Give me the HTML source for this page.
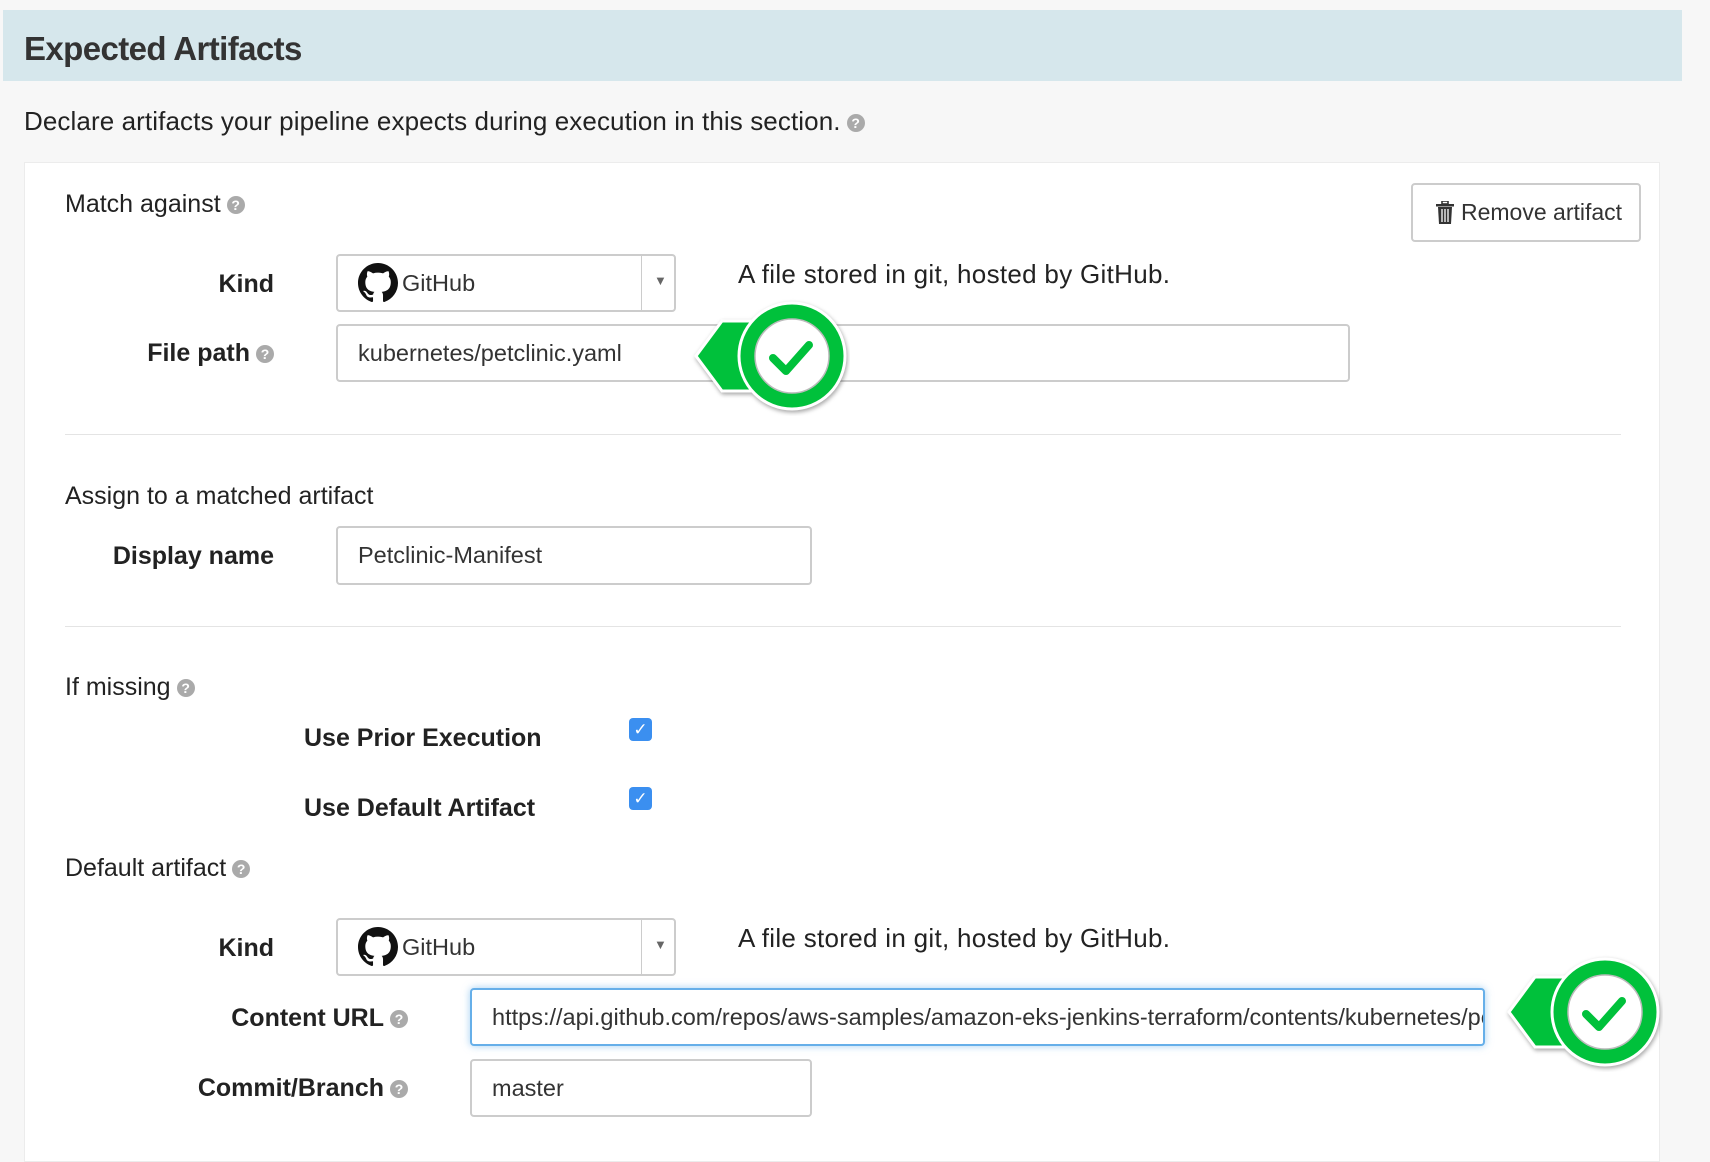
<!DOCTYPE html>
<html><head><meta charset="utf-8"><style>
*{box-sizing:border-box;margin:0;padding:0}
body{width:1710px;height:1150px;background:#f7f7f7;font-family:"Liberation Sans",sans-serif;color:#222;position:relative;overflow:hidden}
.a{position:absolute;white-space:nowrap}
.hdr{left:3px;top:10px;width:1679px;height:71px;background:#d6e7ec}
.t{font-size:25px;letter-spacing:0;line-height:28px}
.b{font-weight:bold;font-size:25px;letter-spacing:0;line-height:28px;text-align:right}
.q{display:inline-block;width:18px;height:18px;border-radius:50%;background:#aaa;color:#fff;font-size:14px;line-height:18px;text-align:center;font-weight:bold;vertical-align:2px;margin-left:6px;letter-spacing:0}
.inp{background:#fff;border:2px solid #ccc;border-radius:4px;font-size:23.5px;color:#333;padding-left:20px;letter-spacing:0;display:flex;align-items:center;overflow:hidden}
.hr{left:65px;width:1556px;height:1px;background:#e4e4e4}
.cb{width:23px;height:23px;border-radius:4px;background:#3b8ff0;color:#fff;font-size:17px;line-height:23px;text-align:center}
</style></head><body>
<div class="a hdr"></div>
<div class="a" style="left:24px;top:30px;font-size:33px;font-weight:bold;color:#333;letter-spacing:-0.6px">Expected Artifacts</div>
<div class="a t" style="left:24px;top:107px;font-size:26px;letter-spacing:0.1px">Declare artifacts your pipeline expects during execution in this section.<span class="q">?</span></div>
<div class="a" style="left:24px;top:162px;width:1636px;height:1000px;background:#fff;border:1px solid #ececec"></div>

<div class="a t" style="left:65px;top:190px">Match against<span class="q">?</span></div>
<div class="a inp" style="left:1411px;top:183px;width:230px;height:59px;padding-left:22px;font-size:23px">
<svg width="20" height="24" viewBox="0 0 20 24" style="margin-right:6px"><rect x="1" y="3" width="18" height="2.5" fill="#333"/><rect x="7" y="0" width="6" height="3" fill="none" stroke="#333" stroke-width="1.6"/><path d="M3 6h14l-1 17H4z" fill="#333"/><path d="M7 8v13M10 8v13M13 8v13" stroke="#fff" stroke-width="1.3"/></svg>Remove artifact</div>

<div class="a b" style="left:100px;width:174px;top:270px">Kind</div>
<div class="a inp" style="left:336px;top:254px;width:340px;height:58px;padding-left:20px">
<svg width="40" height="40" viewBox="0 0 16 16" style="margin-right:4px"><path fill="#111" d="M8 0C3.58 0 0 3.58 0 8c0 3.54 2.29 6.53 5.47 7.59.4.07.55-.17.55-.38 0-.19-.01-.82-.01-1.49-2.01.37-2.53-.49-2.69-.94-.09-.23-.48-.94-.82-1.130-.28-.15-.68-.52-.01-.53.63-.01 1.08.58 1.23.82.72 1.21 1.87.87 2.33.66.07-.52.28-.87.51-1.07-1.78-.2-3.64-.89-3.64-3.95 0-.87.31-1.59.82-2.15-.08-.2-.36-1.02.08-2.12 0 0 .67-.21 2.2.82.64-.18 1.32-.27 2-.27.68 0 1.36.09 2 .27 1.53-1.04 2.2-.82 2.2-.82.44 1.1.16 1.92.08 2.12.51.56.82 1.27.82 2.15 0 3.07-1.87 3.75-3.65 3.95.29.25.54.73.54 1.48 0 1.07-.01 1.93-.01 2.2 0 .21.15.46.55.38A8.013 8.013 0 0016 8c0-4.42-3.58-8-8-8z"/></svg>GitHub
<div style="position:absolute;left:303px;top:0;width:1px;height:100%;background:#ccc"></div><div style="position:absolute;left:316px;top:17px;font-size:13px;color:#666">▼</div></div>
<div class="a t" style="left:738px;top:260px;font-size:26px;letter-spacing:0.3px">A file stored in git, hosted by GitHub.</div>

<div class="a b" style="left:60px;width:214px;top:339px">File path<span class="q">?</span></div>
<div class="a inp" style="left:336px;top:324px;width:1014px;height:58px">kubernetes/petclinic.yaml</div>

<div class="a hr" style="top:434px"></div>
<div class="a t" style="left:65px;top:482px">Assign to a matched artifact</div>
<div class="a b" style="left:60px;width:214px;top:542px">Display name</div>
<div class="a inp" style="left:336px;top:526px;width:476px;height:59px">Petclinic-Manifest</div>
<div class="a hr" style="top:626px"></div>

<div class="a t" style="left:65px;top:673px">If missing<span class="q">?</span></div>
<div class="a b" style="left:304px;top:724px;text-align:left">Use Prior Execution</div>
<div class="a cb" style="left:629px;top:718px">✓</div>
<div class="a b" style="left:304px;top:794px;text-align:left">Use Default Artifact</div>
<div class="a cb" style="left:629px;top:787px">✓</div>
<div class="a t" style="left:65px;top:854px">Default artifact<span class="q">?</span></div>

<div class="a b" style="left:100px;width:174px;top:934px">Kind</div>
<div class="a inp" style="left:336px;top:918px;width:340px;height:58px;padding-left:20px">
<svg width="40" height="40" viewBox="0 0 16 16" style="margin-right:4px"><path fill="#111" d="M8 0C3.58 0 0 3.58 0 8c0 3.54 2.29 6.53 5.47 7.59.4.07.55-.17.55-.38 0-.19-.01-.82-.01-1.49-2.01.37-2.53-.49-2.69-.94-.09-.23-.48-.94-.82-1.13-.28-.15-.68-.52-.01-.53.63-.01 1.08.58 1.23.82.72 1.21 1.87.87 2.33.66.07-.52.28-.87.51-1.07-1.78-.2-3.64-.89-3.64-3.95 0-.87.31-1.59.82-2.15-.08-.2-.36-1.02.08-2.12 0 0 .67-.21 2.2.82.64-.18 1.32-.27 2-.27.68 0 1.36.09 2 .27 1.53-1.04 2.2-.82 2.2-.82.44 1.1.16 1.92.08 2.12.51.56.82 1.27.82 2.15 0 3.07-1.87 3.75-3.65 3.95.29.25.54.73.54 1.48 0 1.07-.01 1.93-.01 2.2 0 .21.15.46.55.38A8.013 8.013 0 0016 8c0-4.42-3.58-8-8-8z"/></svg>GitHub
<div style="position:absolute;left:303px;top:0;width:1px;height:100%;background:#ccc"></div><div style="position:absolute;left:316px;top:17px;font-size:13px;color:#666">▼</div></div>
<div class="a t" style="left:738px;top:924px;font-size:26px;letter-spacing:0.3px">A file stored in git, hosted by GitHub.</div>

<div class="a b" style="left:180px;width:228px;top:1004px">Content URL<span class="q">?</span></div>
<div class="a inp" style="left:470px;top:988px;width:1015px;height:58px;border-color:#66afe9;box-shadow:0 0 8px rgba(102,175,233,.6)">https://api.github.com/repos/aws-samples/amazon-eks-jenkins-terraform/contents/kubernetes/petclinic.yaml</div>
<div class="a b" style="left:150px;width:258px;top:1074px">Commit/Branch<span class="q">?</span></div>
<div class="a inp" style="left:470px;top:1059px;width:342px;height:58px">master</div>

<svg class="a" style="left:690px;top:296px" width="160" height="120" viewBox="0 0 160 120">
<g filter="drop-shadow(1px 2px 2px rgba(0,0,0,.35))">
<polygon points="6,60 32,25 102,25 102,95 32,95" fill="#00c13b" stroke="#fff" stroke-width="3"/>
<circle cx="102" cy="60" r="53" fill="#00c13b" stroke="#fff" stroke-width="3"/></g>
<circle cx="102" cy="60" r="37" fill="#fff" stroke="#bbb" stroke-width="1.5"/>
<path d="M83 62l13 13 23-26" fill="none" stroke="#00c13b" stroke-width="8" stroke-linecap="round" stroke-linejoin="round"/>
</svg>
<svg class="a" style="left:1503px;top:952px" width="160" height="120" viewBox="0 0 160 120">
<g filter="drop-shadow(1px 2px 2px rgba(0,0,0,.35))">
<polygon points="6,60 32,25 102,25 102,95 32,95" fill="#00c13b" stroke="#fff" stroke-width="3"/>
<circle cx="102" cy="60" r="53" fill="#00c13b" stroke="#fff" stroke-width="3"/></g>
<circle cx="102" cy="60" r="37" fill="#fff" stroke="#bbb" stroke-width="1.5"/>
<path d="M83 62l13 13 23-26" fill="none" stroke="#00c13b" stroke-width="8" stroke-linecap="round" stroke-linejoin="round"/>
</svg>
</body></html>
